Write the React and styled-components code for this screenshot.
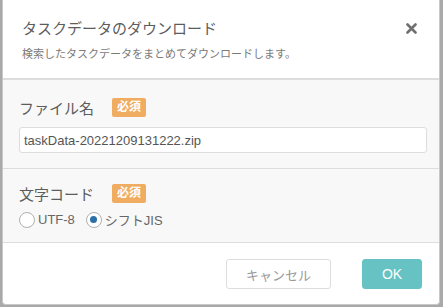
import React, { useState } from 'react'
import styled, { createGlobalStyle } from 'styled-components'

const GlobalStyle = createGlobalStyle`
  html, body {
    margin: 0;
    padding: 0;
    background: #a9a9a9;
    font-family: "Liberation Sans", "Noto Sans CJK JP", sans-serif;
  }
`

const Modal = styled.div`
  margin-left: 2px;
  width: 438px;
  height: 305px;
  box-sizing: border-box;
  background: #fff;
  border: 1px solid #c8c8c8;
  border-top: none;
  border-radius: 0 0 4px 4px;
  display: flex;
  flex-direction: column;
  overflow: hidden;
`

const Header = styled.div`
  position: relative;
  height: 80px;
  box-sizing: border-box;
  padding: 19px 20px 0 19px;
  border-bottom: 2px solid #ddd;
`

const Title = styled.div`
  font-size: 15px;
  line-height: 20px;
  color: #5c5c5c;
`

const Sub = styled.div`
  margin-top: 7px;
  font-size: 11px;
  line-height: 16px;
  color: #7a7a7a;
`

const Close = styled.button`
  position: absolute;
  top: 20px;
  right: 20px;
  width: 16px;
  height: 16px;
  padding: 0;
  border: none;
  background: none;
  display: flex;
  align-items: center;
  justify-content: center;
`

const Body = styled.div`
  background: #f8f8f8;
  flex: 0 0 162px;
  display: flex;
  flex-direction: column;
`

const Section = styled.div`
  padding: ${({ $pad }) => $pad};
  border-bottom: ${({ $last }) => ($last ? 'none' : '1px solid #ddd')};
`

const LabelRow = styled.div`
  display: flex;
  align-items: center;
  gap: 15px;
  height: 20px;
`

const Label = styled.span`
  font-size: 15px;
  color: #5c5c5c;
  width: 78px;
`

const Badge = styled.span`
  background: #f0ad62;
  color: #fff;
  font-size: 12px;
  font-weight: bold;
  border-radius: 2px;
  padding: 1px 5px;
  line-height: 17px;
`

const Input = styled.input`
  display: block;
  width: 408px;
  height: 26px;
  box-sizing: border-box;
  margin-top: 10px;
  border: 1px solid #ddd;
  border-radius: 3px;
  background: #fff;
  padding: 0 4px;
  font-family: "Liberation Sans", "Noto Sans CJK JP", sans-serif;
  font-size: 13px;
  color: #555;
  outline: none;
`

const Radios = styled.div`
  display: flex;
  align-items: center;
  margin-top: 7px;
  gap: 11px;
`

const RadioLabel = styled.label`
  display: flex;
  align-items: center;
  gap: 3px;
  font-size: 13px;
  color: #666;
`

const Circle = styled.span`
  width: 14px;
  height: 14px;
  border-radius: 50%;
  border: 1.5px solid #b0b0b0;
  background: #fff;
  display: flex;
  align-items: center;
  justify-content: center;

  &::after {
    content: '';
    width: 7px;
    height: 7px;
    border-radius: 50%;
    background: ${({ $on }) => ($on ? '#2a6fa8' : 'transparent')};
  }
`

const Footer = styled.div`
  border-top: 1px solid #ddd;
  flex: 1;
  display: flex;
  justify-content: flex-end;
  align-items: flex-start;
  padding: 16px 17px 0 0;
  gap: 31px;
`

const Button = styled.button`
  height: 30px;
  width: ${({ $w }) => $w}px;
  border-radius: 3px;
  font-family: "Liberation Sans", "Noto Sans CJK JP", sans-serif;
  font-size: ${({ $primary }) => ($primary ? 14 : 13)}px;
  border: 1px solid ${({ $primary }) => ($primary ? '#66c2c3' : '#ddd')};
  background: ${({ $primary }) => ($primary ? '#66c2c3' : '#fff')};
  color: ${({ $primary }) => ($primary ? '#fff' : '#999')};
`

const App = () => {
  const [enc, setEnc] = useState('sjis')
  return (
    <>
      <GlobalStyle />
      <Modal>
        <Header>
          <Title>タスクデータのダウンロード</Title>
          <Sub>検索したタスクデータをまとめてダウンロードします。</Sub>
          <Close>
            <svg width="11" height="11" viewBox="0 0 11 11">
              <path d="M1.5 1.5 L9.5 9.5 M9.5 1.5 L1.5 9.5" stroke="#707070" strokeWidth="2.6" strokeLinecap="round" />
            </svg>
          </Close>
        </Header>
        <Body>
          <Section $pad="17px 16px 15px 16px">
            <LabelRow>
              <Label>ファイル名</Label>
              <Badge>必須</Badge>
            </LabelRow>
            <Input defaultValue="taskData-20221209131222.zip" />
          </Section>
          <Section $pad="14px 16px 0 16px" $last>
            <LabelRow>
              <Label>文字コード</Label>
              <Badge>必須</Badge>
            </LabelRow>
            <Radios>
              <RadioLabel onClick={() => setEnc('utf8')}>
                <Circle $on={enc === 'utf8'} />
                UTF-8
              </RadioLabel>
              <RadioLabel onClick={() => setEnc('sjis')}>
                <Circle $on={enc === 'sjis'} />
                シフトJIS
              </RadioLabel>
            </Radios>
          </Section>
        </Body>
        <Footer>
          <Button $w={105}>キャンセル</Button>
          <Button $w={60} $primary>OK</Button>
        </Footer>
      </Modal>
    </>
  )
}

export default App
